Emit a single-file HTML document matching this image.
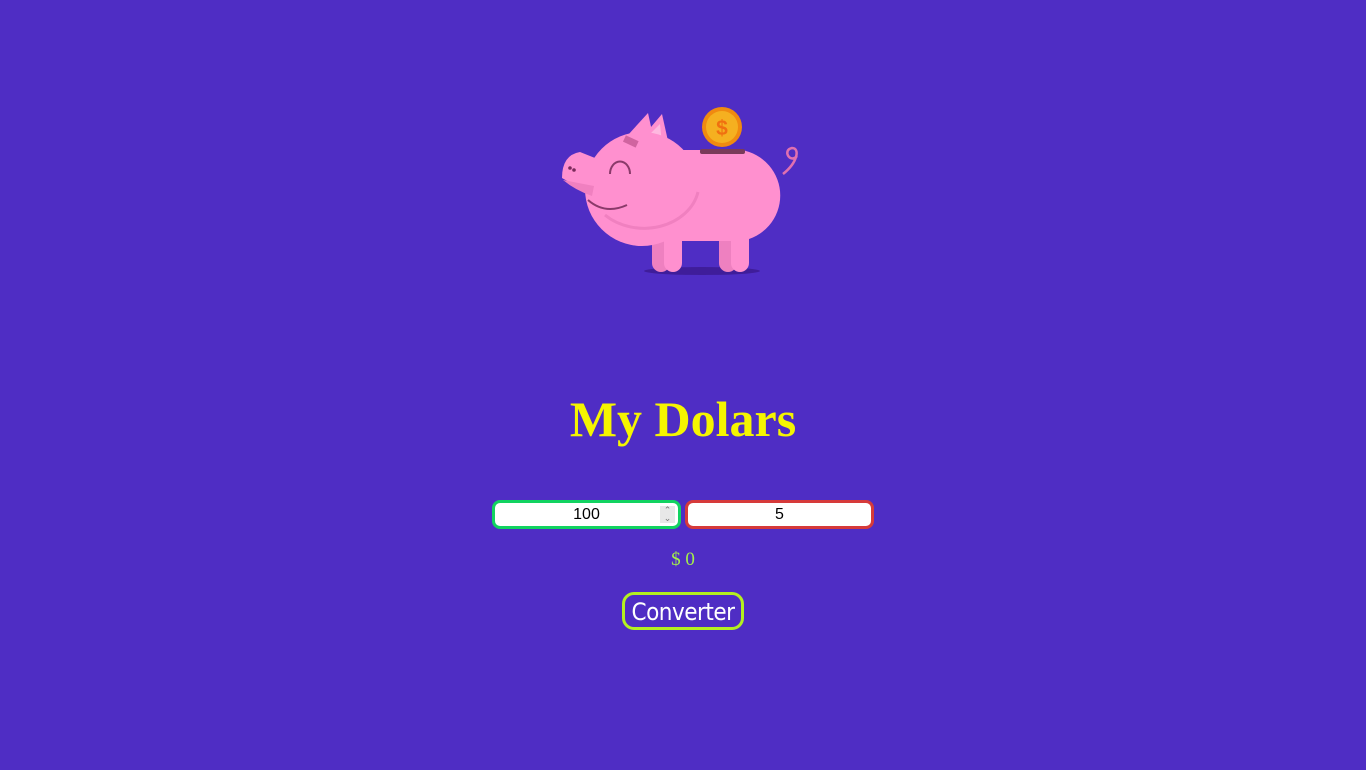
<!DOCTYPE html>
<html><head><style>
html,body{margin:0;padding:0;width:1366px;height:770px;background:#4f2dc4;overflow:hidden;}
.t{position:absolute;left:0;width:1366px;top:390px;text-align:center;font:bold 50px "Liberation Serif",serif;color:#f5f500;}
.in{position:absolute;top:500px;height:23px;width:183px;background:#fff;border-radius:8px;font:16px "Liberation Sans",sans-serif;text-align:center;line-height:24px;color:#000;}
.g{left:492px;border:3px solid #11d360;}
.r{left:685px;border:3px solid #d63a3a;}
.d{position:absolute;left:0;width:1366px;top:549px;text-align:center;font:19px "Liberation Serif",serif;color:#a4f04a;}
.b{position:absolute;left:622px;top:592px;width:116px;height:32px;border:3px solid #b4f020;border-radius:12px;font:24px "DejaVu Sans Condensed","DejaVu Sans",sans-serif;color:#fff;text-align:center;line-height:34px;letter-spacing:-0.5px;}
</style></head><body>
<svg width="1366" height="300" style="position:absolute;left:0;top:0">
<ellipse cx="702" cy="271" rx="58" ry="4" fill="#3f1d9a"/>
<rect x="652" y="220" width="18" height="52" rx="9" fill="#ee80c0"/>
<rect x="664" y="220" width="18" height="52" rx="9" fill="#ff90cf"/>
<rect x="719" y="220" width="18" height="52" rx="9" fill="#ee80c0"/>
<rect x="731" y="220" width="18" height="52" rx="9" fill="#ff90cf"/>
<path d="M783 174 C798 162 800 148 792 148 C782 150 790 164 797 156" stroke="#e070b0" stroke-width="2.5" fill="none"/>
<path d="M640 150 H741 A46 46 0 0 1 741 241 H640 Z" fill="#ff90cf"/>
<polygon points="628,135 648,113 655,145" fill="#ff90cf"/>
<polygon points="640,140 662,114 670,150" fill="#ff90cf"/>
<polygon points="648,136 660,124 662,144" fill="#ffb8e0"/>
<circle cx="642" cy="189" r="57" fill="#ff90cf"/>
<path d="M605 215 A55 45 0 0 0 698 192" stroke="#f080c0" stroke-width="3" fill="none"/>
<path d="M562 178 Q562 155 580 152 L600 160 L592 195 Z" fill="#ff90cf"/>
<path d="M563 180 Q575 190 592 196 L594 186 Z" fill="#f080c0"/>
<circle cx="570" cy="168" r="1.8" fill="#7a2a5a"/><circle cx="574" cy="170" r="1.8" fill="#7a2a5a"/>
<path d="M610 174 A8 10 0 0 1 630 174" stroke="#8a3a6a" stroke-width="2" fill="none"/>
<path d="M588 200 Q605 215 627 205" stroke="#8a3a6a" stroke-width="2" fill="none"/>
<rect x="624" y="138" width="14" height="7" transform="rotate(25 631 141)" fill="#d064a0"/>
<rect x="700" y="149" width="45" height="5" rx="2" fill="#7a3a5a"/>
<circle cx="722" cy="127" r="20" fill="#f08a10"/>
<circle cx="722" cy="127" r="16" fill="#f5b020"/>
<text x="722" y="135" text-anchor="middle" font-family="Liberation Sans" font-weight="bold" font-size="21" fill="#f07010">$</text>
</svg>
<div class="t">My Dolars</div>
<div class="in g">100<span style="position:absolute;right:3px;top:3px;width:15px;height:17px;background:#e8e8e8;font-size:9px;line-height:8px;color:#777">⌃<br>⌄</span></div>
<div class="in r">5</div>
<div class="d">$ 0</div>
<div class="b">Converter</div>
</body></html>
